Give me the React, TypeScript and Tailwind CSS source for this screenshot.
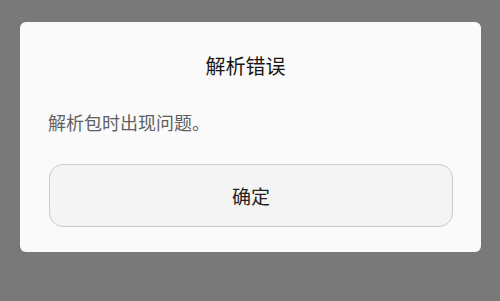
export default function App() {
  return (
    <main
      className="min-h-[301px] w-full bg-[#797979] pt-[22px] pl-[20px]"
      style={{ fontFamily: '"Noto Sans CJK SC", "Noto Sans", sans-serif' }}
    >
      <div className="w-[461px] rounded-[6px] bg-[#fafafa] px-[28px] pt-[32px] pb-[25px]">
        {/* Title */}
        <h1 className="pr-[10px] text-center text-[20px] leading-[24px] font-normal text-[#161616]">解析错误</h1>

        {/* Message */}
        <p className="mt-[32px] text-[18px] leading-[24px] text-[#606060]">解析包时出现问题。</p>

        {/* Action */}
        <button className="mt-[30px] ml-[1px] flex h-[63px] w-[404px] items-center justify-center rounded-[14px] border border-[#cbcbcb] bg-[#f4f4f4] pt-[2px] text-[19px] text-[#222222]">
          确定
        </button>
      </div>
    </main>
  )
}
